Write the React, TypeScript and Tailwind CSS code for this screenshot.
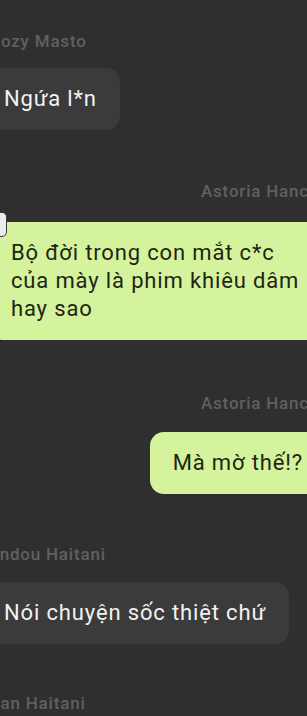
const font = { fontFamily: "Roboto, 'Noto Sans', sans-serif" }

function Name({ children, className }: { children: string; className: string }) {
  return (
    <div className={`whitespace-nowrap text-[17px] leading-[20px] font-medium tracking-[0.8px] text-[#606060] ${className}`}>
      {children}
    </div>
  )
}

const bubble = "rounded-[14px] px-[23px] py-[17px] text-[22px] leading-[28px] tracking-[0.85px]"

export default function App() {
  return (
    <div className="h-[716px] w-[307px] overflow-hidden bg-[#2f2f2f]" style={font}>
      <div className="-mx-[19px] flex flex-col pt-[31px]">
        {/* Cozy Masto */}
        <Name className="pl-[8px]">Cozy Masto</Name>
        <div className={`mt-[17px] self-start bg-[#3b3b3b] text-[#f2f2f2] ${bubble}`}>Ngứa l*n</div>

        {/* Astoria */}
        <Name className="mt-[51px] pl-[220px]">Astoria Hancock</Name>
        <div className={`relative mt-[21px] ml-[7px] bg-[#d5f29c] text-[#1d2613] ${bubble}`}>
          <div className="absolute left-[4px] -top-[10px] h-[25px] w-[15px] rounded-[5px] border-[1.5px] border-[#3a3a3a] bg-[#ececec]" />
          Bộ đời trong con mắt c*c
          <br />
          của mày là phim khiêu dâm
          <br />
          hay sao
        </div>

        <Name className="mt-[53px] pl-[220px]">Astoria Hancock</Name>
        <div className={`mt-[19px] self-end bg-[#d5f29c] text-[#1d2613] ${bubble}`}>Mà mờ thế!?</div>

        {/* Rindou */}
        <Name className="mt-[50px] pl-[2px]">Rindou Haitani</Name>
        <div className={`mt-[18px] self-start bg-[#3b3b3b] text-[#f2f2f2] ${bubble}`}>Nói chuyện sốc thiệt chứ</div>

        {/* Ran */}
        <Name className="mt-[49px] pl-[8px]">Ran Haitani</Name>
      </div>
    </div>
  )
}
